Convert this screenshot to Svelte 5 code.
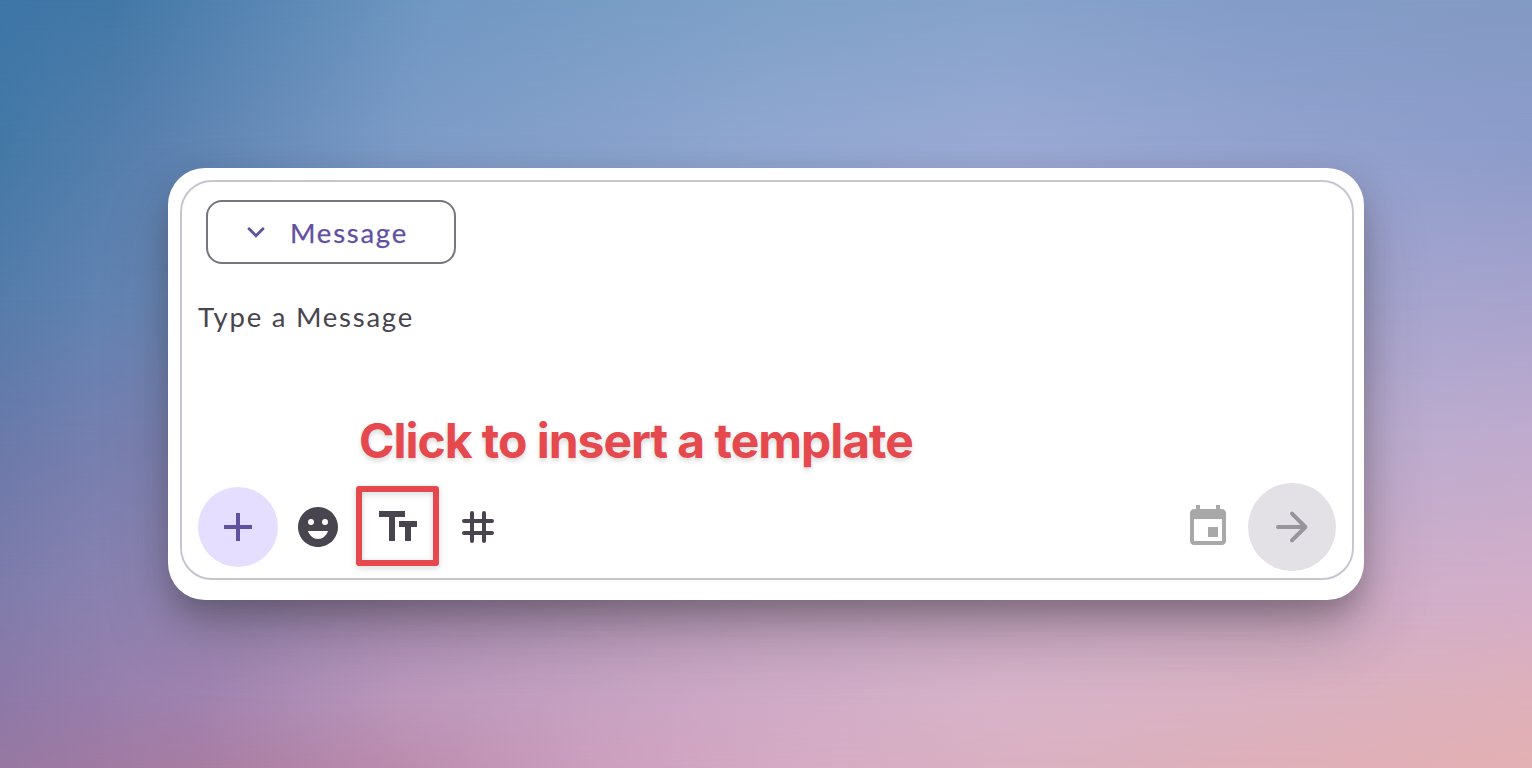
<script>
  let message = $state('');
</script>

<main class="stage">
  <div class="wash w0"></div>
  <div class="wash w1"></div>
  <div class="wash w2"></div>
  <div class="wash w3"></div>
  <div class="wash w4"></div>
  <div class="wash w5"></div>
  <div class="wash w6"></div>

  <section class="card">
    <div class="composer">
      <button class="mode" type="button">
        <svg width="20" height="20" viewBox="0 0 20 20" fill="none" stroke="currentColor" stroke-width="2.8" stroke-linecap="round" stroke-linejoin="miter">
          <path d="M3 6.8 10 13.8 17 6.8" />
        </svg>
        <span>Message</span>
      </button>

      <div class="field">Type a Message</div>

      <p class="note">Click to insert a template</p>

      <div class="toolbar">
        <button class="add" type="button">
          <svg width="48" height="48" viewBox="0 0 24 24" fill="currentColor">
            <path d="M19 13h-6v6h-2v-6H5v-2h6V5h2v6h6z" />
          </svg>
        </button>
        <div class="tools">
          <button class="tool" type="button">
            <svg width="48" height="48" viewBox="0 0 24 24" fill="currentColor">
              <path fill-rule="evenodd" d="M12 2C6.48 2 2 6.48 2 12s4.48 10 10 10 10-4.48 10-10S17.52 2 12 2zM8.5 8a1.5 1.5 0 1 1 0 3 1.5 1.5 0 0 1 0-3zM12 18c-2.28 0-4.22-1.66-5-4h10c-.78 2.34-2.72 4-5 4zm3.5-7a1.5 1.5 0 1 1 0-3 1.5 1.5 0 0 1 0 3z" />
            </svg>
          </button>
          <button class="tool" type="button">
            <svg width="48" height="48" viewBox="0 0 24 24" fill="currentColor">
              <path d="M2.5 4v3h5v12h3V7h5V4h-13zm19 5h-9v3h3v7h3v-7h3V9z" />
            </svg>
            <span class="marker"></span>
          </button>
          <button class="tool" type="button">
            <svg width="48" height="48" viewBox="0 0 48 48" fill="none" stroke="currentColor" stroke-width="4" stroke-linecap="round">
              <path d="M18 10v28M30 10v28M10 18h28M10 30h28" />
            </svg>
          </button>
        </div>
        <button class="schedule" type="button">
          <svg width="48" height="48" viewBox="0 0 24 24" fill="currentColor">
            <path d="M17 12h-5v5h5v-5zM16 1v2H8V1H6v2H5c-1.11 0-1.99.9-1.99 2L3 19c0 1.1.89 2 2 2h14c1.1 0 2-.9 2-2V5c0-1.1-.9-2-2-2h-1V1h-2zm3 18H5V8h14v11z" />
          </svg>
        </button>
        <button class="send" type="button" disabled={!message}>
          <svg width="48" height="48" viewBox="0 0 48 48" fill="none" stroke="currentColor" stroke-width="4" stroke-linecap="round" stroke-linejoin="round">
            <path d="M10 24h27M24 10.6 37.4 24 24 37.4" />
          </svg>
        </button>
      </div>
    </div>
  </section>
</main>

<style>
  :global(body) { margin: 0; }
  * { box-sizing: border-box; }
  button { margin: 0; padding: 0; border: 0; background: none; font: inherit; display: flex; align-items: center; justify-content: center; }
  svg { display: block; flex: none; }

  .stage {
    position: relative;
    width: 1532px;
    height: 768px;
    overflow: hidden;
    display: flex;
    align-items: center;
    justify-content: center;
    font-family: Lato, "Open Sans", sans-serif;
  }

  /* Colour rows blended downwards into one mesh */
  .wash { position: absolute; inset: 0; }
  .w0 { background: linear-gradient(90deg, #3d76a8 0, #4278a6 110px, #5886b4 260px, #7098c2 430px, #7fa1c8 766px, #86a3cc 1000px, #839dc8 1250px, #839ac4 1532px); }
  .w1 { background: linear-gradient(90deg, #4479a6 0, #5a80af 150px, #7c9bc6 400px, #91a7d1 766px, #9aaad4 1000px, #92a1ce 1300px, #8d9cca 1532px); mask-image: linear-gradient(transparent 0, #000 150px); }
  .w2 { background: linear-gradient(90deg, #557cab 0, #6686b5 140px, #8f9fcd 600px, #a6a5cf 1400px, #a7a3cd 1532px); mask-image: linear-gradient(transparent 150px, #000 300px); }
  .w3 { background: linear-gradient(90deg, #6a7aaa 0, #7a82b2 140px, #a79fc8 700px, #bdaccf 1420px, #c0abce 1532px); mask-image: linear-gradient(transparent 300px, #000 440px); }
  .w4 { background: linear-gradient(90deg, #807cab 0, #9084b2 150px, #ac92b9 400px, #c5a8c5 766px, #cfaec9 1100px, #d2aec9 1430px, #d4aec8 1532px); mask-image: linear-gradient(transparent 440px, #000 600px); }
  .w5 { background: linear-gradient(90deg, #8d79a8 0, #a083b0 200px, #bb98bc 400px, #cda8c6 700px, #d8b4ca 1000px, #dab2c1 1300px, #deb0ba 1532px); mask-image: linear-gradient(transparent 600px, #000 695px); }
  .w6 { background: linear-gradient(90deg, #9778a2 0, #a87da2 200px, #bb8cae 400px, #cc9fbe 600px, #d5abc4 800px, #dab1c0 1050px, #dfafb8 1300px, #e3b0b3 1532px); mask-image: linear-gradient(transparent 695px, #000 768px); }

  .card {
    position: relative;
    width: 1196px;
    height: 432px;
    padding: 12px 10px 20px 12px;
    border-radius: 37px;
    background: #fff;
    box-shadow: 0 16px 32px -4px rgba(45, 38, 45, 0.34), 0 36px 70px -6px rgba(45, 38, 45, 0.28);
  }

  .composer {
    width: 100%;
    height: 100%;
    display: flex;
    flex-direction: column;
    align-items: flex-start;
    padding: 18px 16px 7px;
    border: 2px solid #c9c5d0;
    border-radius: 32px;
  }

  .mode {
    width: 250px;
    height: 64px;
    margin-left: 8px;
    justify-content: flex-start;
    padding-left: 38px;
    gap: 24px;
    border: 2px solid #78757f;
    border-radius: 16px;
    color: #6250a0;
    font-size: 27.5px;
    letter-spacing: 1.75px;
    -webkit-text-stroke: 0.25px currentColor;
  }

  .field {
    margin-top: 35px;
    height: 36px;
    color: #48454e;
    font-size: 27.5px;
    line-height: 36px;
    letter-spacing: 1.75px;
    white-space: nowrap;
  }

  .note {
    margin: auto 0 12.5px 161px;
    color: #e5484d;
    font: 700 48px/60px Inter, sans-serif;
    letter-spacing: -1.02px;
    white-space: nowrap;
    text-shadow: 0 3px 5px rgba(0, 0, 0, 0.15);
  }

  .toolbar { width: 100%; display: flex; align-items: center; }
  .add { width: 80px; height: 80px; border-radius: 50%; background: #e6deff; color: #6250a0; }
  .tools { display: flex; gap: 32px; margin-left: 16px; color: #48454e; }
  .tool { position: relative; color: inherit; }
  .marker {
    position: absolute;
    left: -18px;
    top: -17.5px;
    width: 83px;
    height: 80px;
    border: 6px solid #e5484d;
    border-radius: 3px;
    filter: drop-shadow(0 2px 3px rgba(0, 0, 0, 0.16));
  }
  .schedule { margin-left: auto; color: #a8a8a8; }
  .send { width: 88px; height: 88px; margin-left: 16px; border-radius: 50%; background: #e3e1e6; color: #97949b; }
</style>
